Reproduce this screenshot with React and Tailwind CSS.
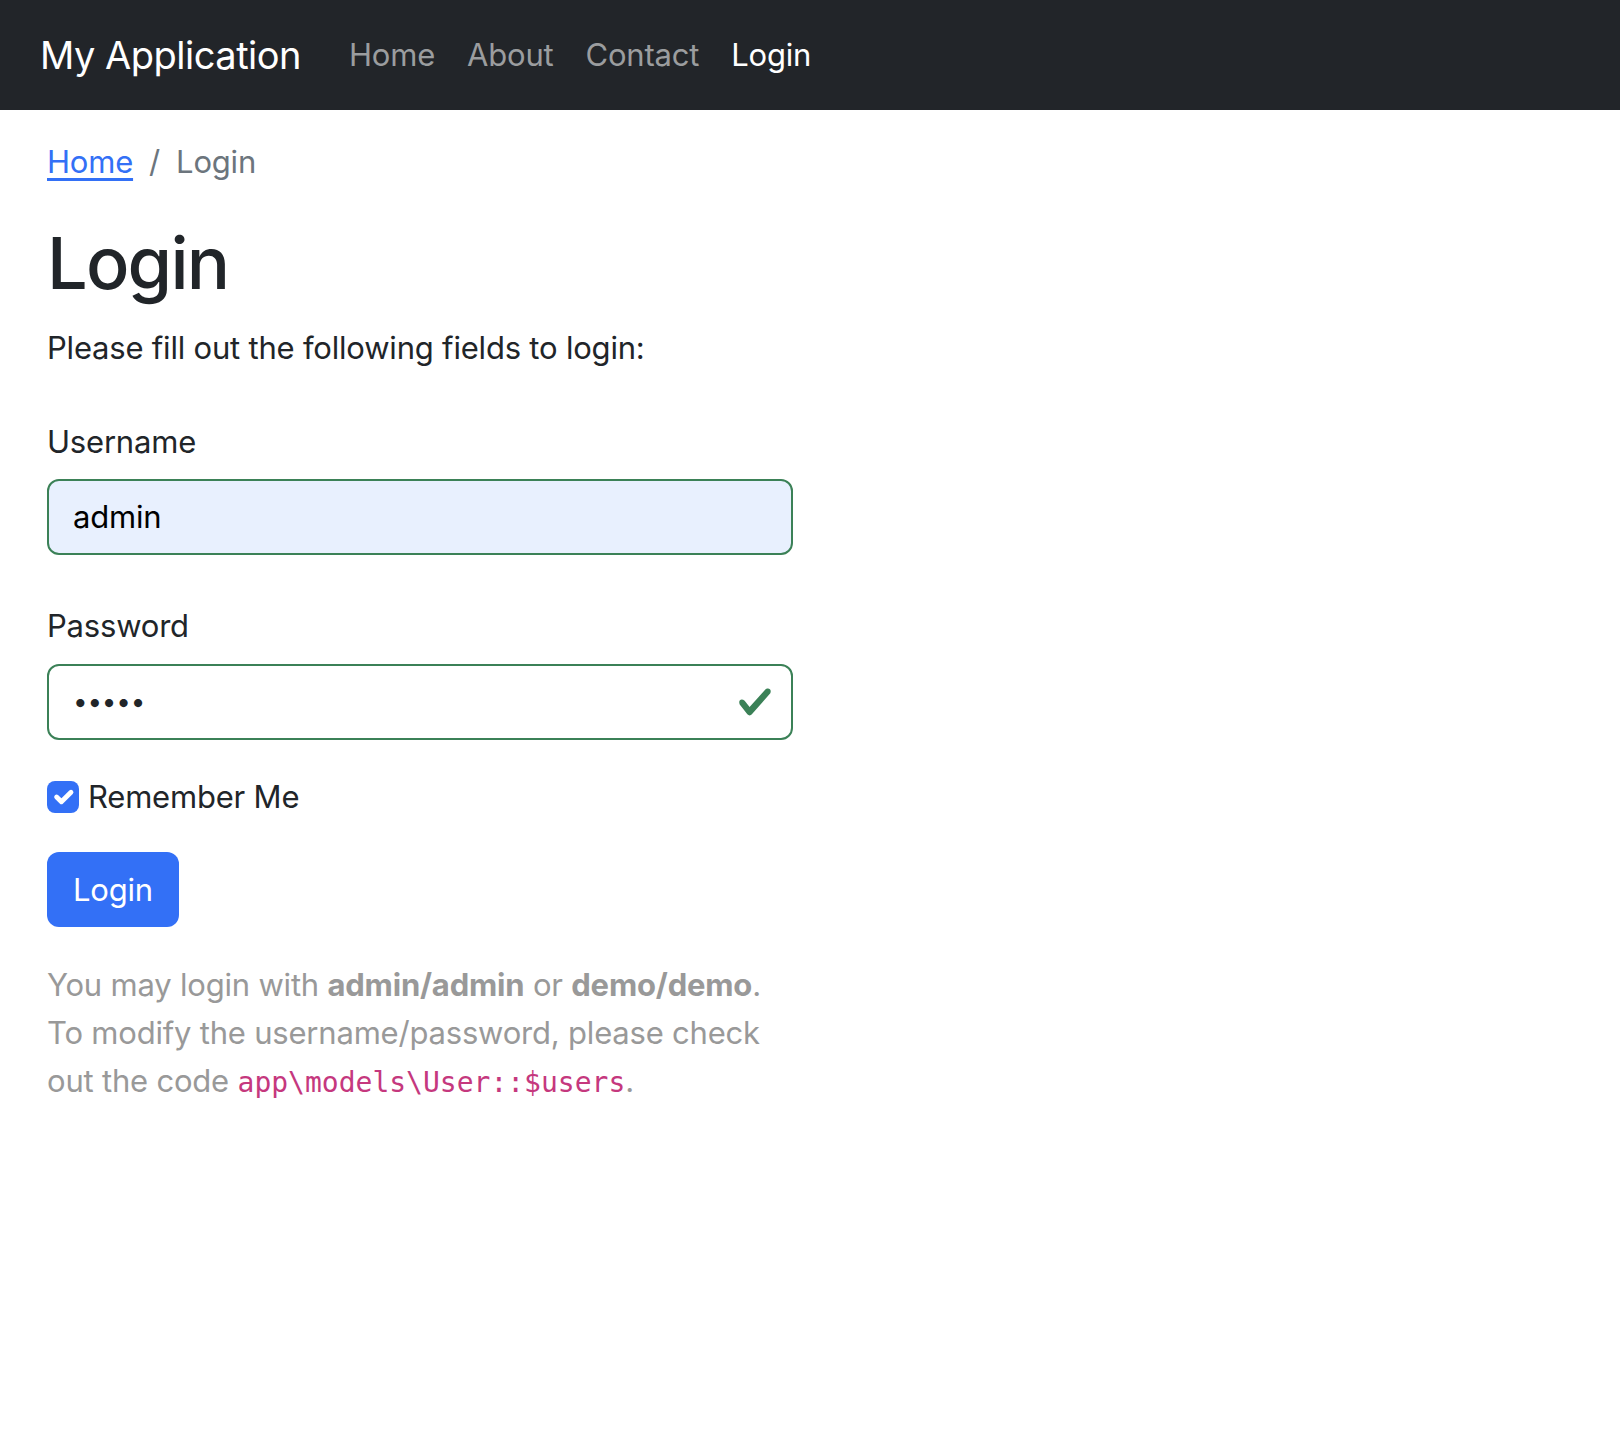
import React from 'react';

const navLinks = [
  { label: 'Home', active: false },
  { label: 'About', active: false },
  { label: 'Contact', active: false },
  { label: 'Login', active: true },
];

// Top navigation bar
const Navbar = () => (
  <nav className="h-[110px] bg-[#222529] flex items-center pl-[40px]">
    <a href="#" className="text-[38px] leading-[60px] tracking-[-0.5px] text-white mr-[32px]">My Application</a>
    <ul className="flex items-center">
      {navLinks.map((link) => (
        <li key={link.label}>
          <a
            href="#"
            className={
              link.active
                ? 'block px-[16px] text-[31px] leading-[48px] text-white'
                : 'block px-[16px] text-[31px] leading-[48px] text-[#9b9d9f]'
            }
          >
            {link.label}
          </a>
        </li>
      ))}
    </ul>
  </nav>
);

const ValidIcon = () => (
  <svg width="36" height="36" viewBox="0 0 8 8" className="shrink-0">
    <path
      fill="#3b8157"
      d="M2.3 6.73.6 4.53c-.4-1.04.46-1.4 1.1-.8l1.1 1.4 3.4-3.8c.6-.63 1.6-.27 1.2.7l-4 4.6c-.43.5-.8.4-1.1.1z"
    />
  </svg>
);

// Login form
const LoginForm = () => (
  <form className="w-[746px]" onSubmit={(e) => e.preventDefault()}>
    <label className="block mt-[46px] leading-[48px] text-[#212529]">Username</label>
    <div className="mt-[13px] h-[76px] flex items-center px-[24px] border-2 border-[#3b8157] rounded-[12px] bg-[#e8f0fe]">
      <input
        type="text"
        readOnly
        defaultValue="admin"
        className="flex-1 bg-transparent outline-none tracking-[-0.2px] leading-[48px] text-black"
      />
    </div>

    <label className="block mt-[47px] leading-[48px] text-[#212529]">Password</label>
    <div className="mt-[14px] h-[76px] flex items-center pl-[24px] pr-[18px] border-2 border-[#3b8157] rounded-[12px] bg-white">
      <input
        type="password"
        readOnly
        defaultValue="admin"
        className="flex-1 bg-transparent outline-none text-[26px] leading-[48px] text-[#212529]"
      />
      <ValidIcon />
    </div>

    <div className="mt-[33px] flex items-center h-[48px]">
      <span className="w-[32px] h-[32px] rounded-[8px] bg-[#3370f6] flex items-center justify-center">
        <svg width="32" height="32" viewBox="0 0 20 20">
          <path
            fill="none"
            stroke="#fff"
            strokeLinecap="round"
            strokeLinejoin="round"
            strokeWidth="3"
            d="m6 10 3 3 6-6"
          />
        </svg>
      </span>
      <label className="ml-[9px] leading-[48px] text-[#212529]">Remember Me</label>
    </div>

    <button
      type="submit"
      className="mt-[31px] h-[75px] px-[26px] rounded-[12px] bg-[#3370f6] text-white tracking-[-0.2px] leading-[48px]"
    >
      Login
    </button>

    <div className="mt-[34px] leading-[48px] text-[#999]">
      You may login with <strong>admin/admin</strong> or <strong>demo/demo</strong>.<br />
      To modify the username/password, please check<br />
      out the code{' '}
      <code className="font-['DejaVu_Sans_Mono',monospace] text-[28px] tracking-normal text-[#c5387e]">app\models\User::$users</code>.
    </div>
  </form>
);

export default function App() {
  return (
    <div className="min-h-screen bg-white font-['Inter',sans-serif] text-[31px] tracking-[-0.2px]">
      <Navbar />
      <main className="pl-[47px]">
        <nav className="mt-[28px] flex items-center leading-[48px]">
          <a href="#" className="text-[#3370f6] underline underline-offset-[5px]">Home</a>
          <span className="px-[16px] text-[#6c757d]">/</span>
          <span className="text-[#6c757d]">Login</span>
        </nav>
        <h1 className="mt-[34px] text-[72px] leading-[86px] tracking-[-1.8px] font-medium text-[#212529]">Login</h1>
        <p className="mt-[18px] leading-[48px] text-[#212529]">
          Please fill out the following fields to login:
        </p>
        <LoginForm />
      </main>
    </div>
  );
}
